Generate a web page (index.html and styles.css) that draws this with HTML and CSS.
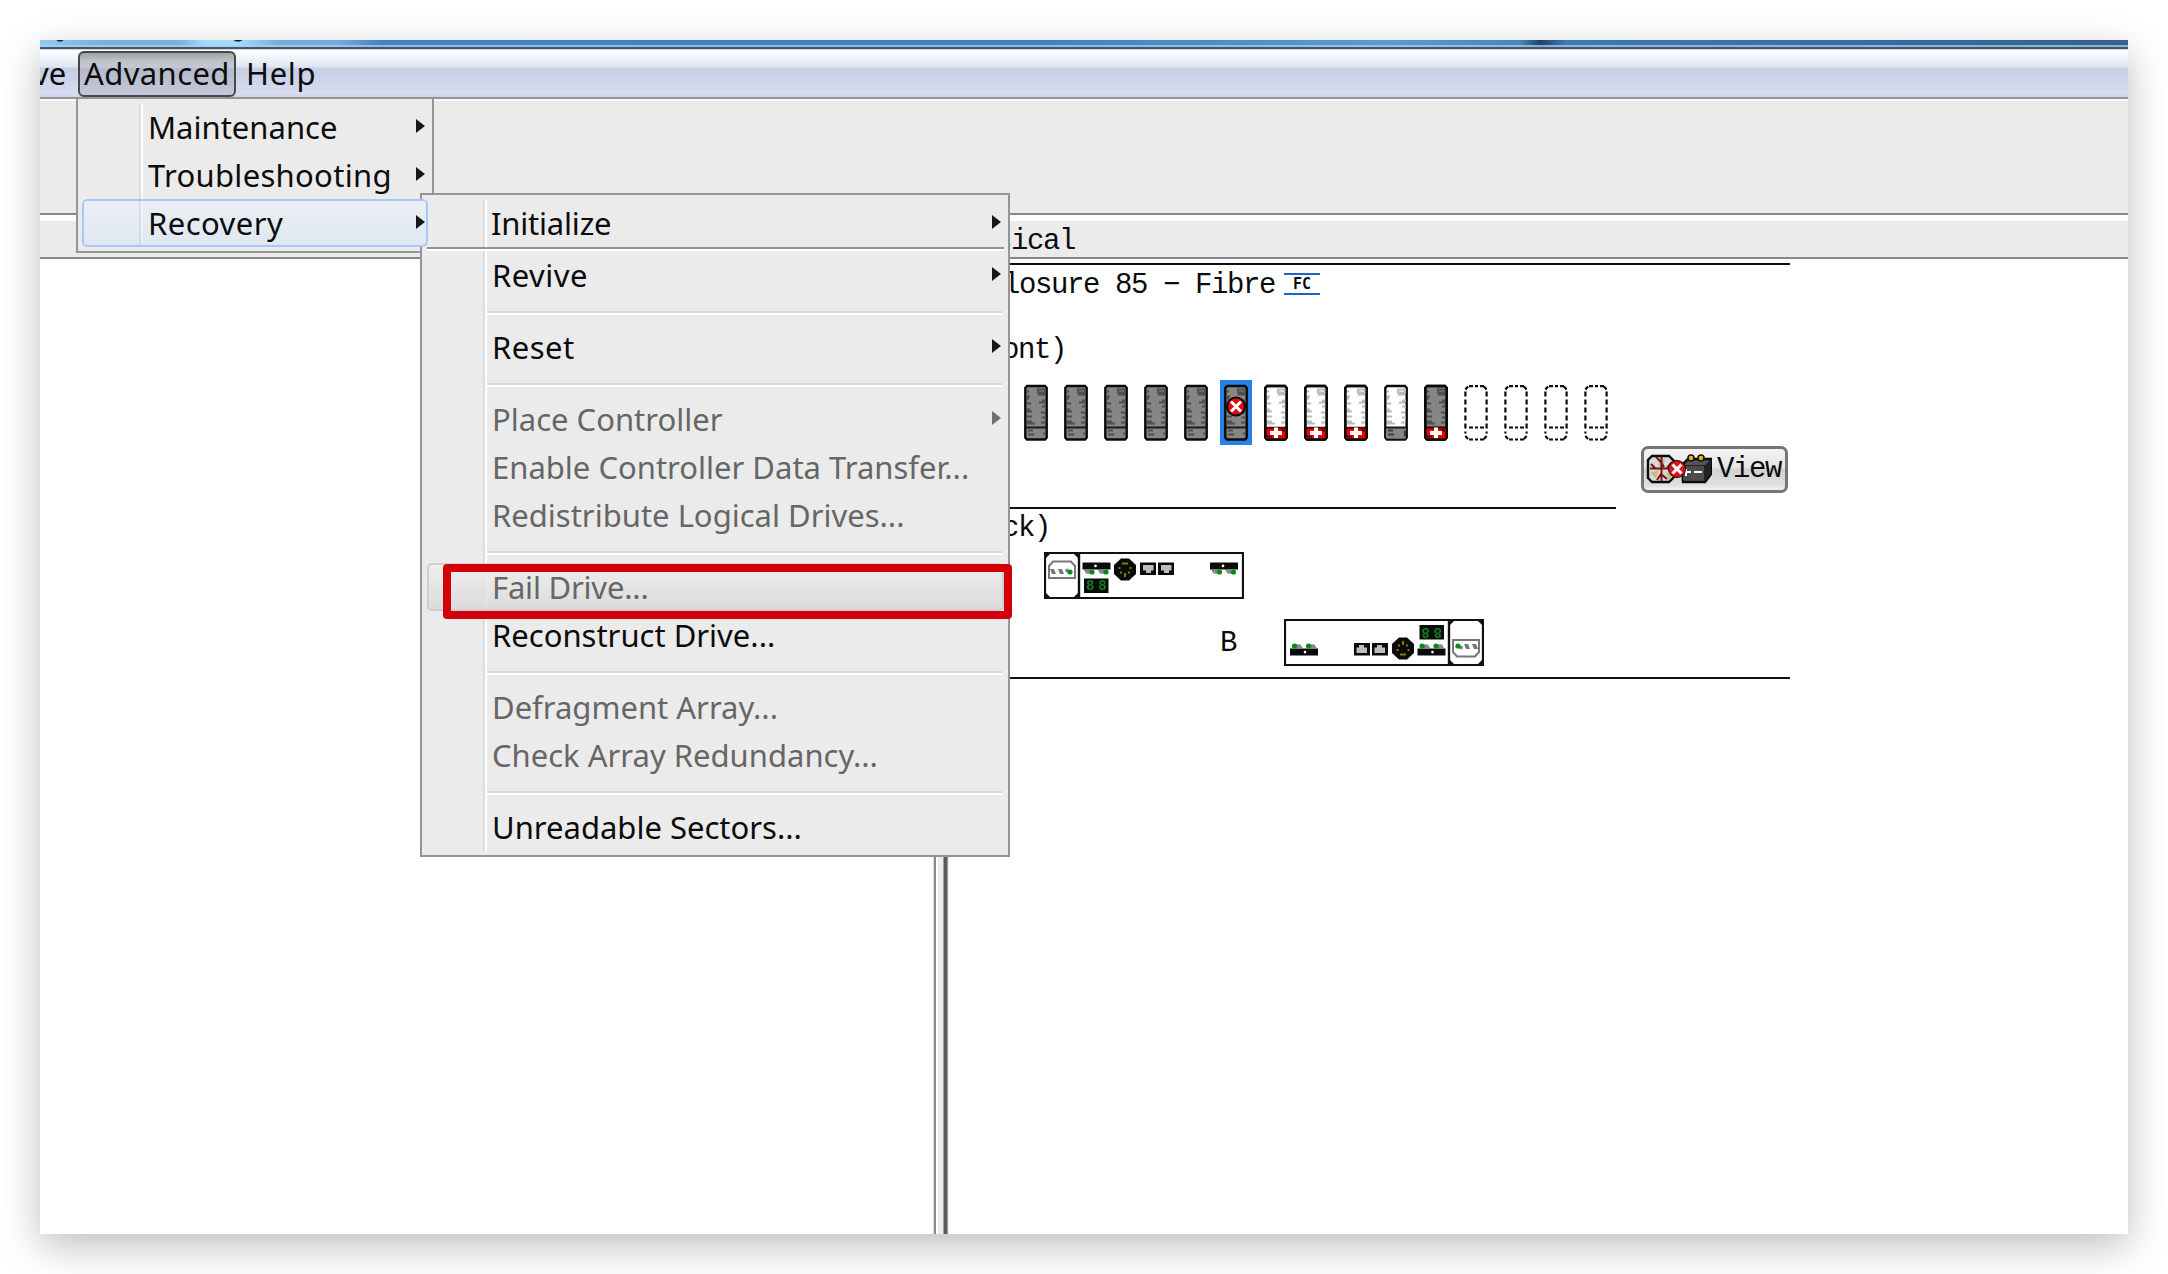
FILE: index.html
```html
<!DOCTYPE html>
<html lang="en">
<head>
<meta charset="utf-8">
<title>Storage Manager</title>
<link rel="stylesheet" href="styles.css">
</head>
<body>
<svg class="defs" width="0" height="0" aria-hidden="true">
  <defs>
    <g id="vents">
      <path d="M14 5h7v3h-7zM14 10h7M18 16h4M15 18h6M18 22h4M17 28h4M18 33h4M17 38h4M3 7h2M3 12h3M3 14h2M3 19h4M3 25h3M3 27h5M3 32h5M3 37h5M3 39h8" fill="none" stroke-width="2"/>
    </g>
    <path id="case" d="M3 1.5H21L22.7 3.5V53L21 55H3L1.3 53V3.5Z"/>
    <g id="drive-gray">
      <use href="#case" fill="#858585" stroke="#0a0a0a" stroke-width="2.4"/>
      <use href="#vents" stroke="#4f4f4f"/>
      <path d="M2 43H22" stroke="#1a1a1a" stroke-width="2"/>
      <path d="M4 46H9M4 50H10M19 49H22" stroke="#4f4f4f" stroke-width="2"/>
    </g>
    <g id="plus">
      <path d="M2 43H22V54H2Z" fill="#ec0000"/>
      <path d="M2 43.3H22M3 52H8M17 46H21" stroke="#4a0508" stroke-width="2"/>
      <path d="M12 43V54M6 48.5H18" stroke="#fff" stroke-width="4"/>
      <use href="#case" fill="none" stroke="#0a0a0a" stroke-width="2.4"/>
    </g>
    <g id="drive-white">
      <use href="#case" fill="#fff" stroke="#0a0a0a" stroke-width="2.4"/>
      <use href="#vents" stroke="#bababa"/>
    </g>
    <g id="drive-spare">
      <use href="#drive-white"/>
      <path d="M2.4 43H21.6V54H2.4Z" fill="#858585"/>
      <path d="M2 43H22" stroke="#1a1a1a" stroke-width="2"/>
      <path d="M4 46H9M4 50H10M21 46V52" stroke="#3d3d3d" stroke-width="2"/>
    </g>
    <g id="drive-empty" fill="none" stroke="#0a0a0a" stroke-width="2.2">
      <path d="M5 1.6H9M11 1.6H14M16 1.6H20M5 55H9M11 55H14M16 55H20M5 43H9M11 43H14M16 43H20"/>
      <path d="M1.4 7V49M22.6 7V49" stroke-dasharray="5 3"/>
      <path d="M1.4 5L4 2M20 2L22.6 5M1.4 51.5L4 54.5M20 54.5L22.6 51.5"/>
    </g>
    <g id="fail">
      <circle r="9" fill="#e30613" stroke="#0a0a0a" stroke-width="2"/>
      <path d="M-5-5L5 5M5-5L-5 5" stroke="#fff" stroke-width="3"/>
    </g>
    <g id="port">
      <path d="M0 0H28V7H0Z" fill="#0a0a0a"/>
      <circle cx="13" cy="3.4" r="1.3" fill="#fff"/>
      <path d="M1 7H7L9 11H4ZM15 7H21L23 11H18Z" fill="#777"/>
      <circle cx="9.5" cy="9.5" r="2.6" fill="#078c10"/><circle cx="23.5" cy="9.5" r="2.6" fill="#078c10"/>
      <circle cx="4.5" cy="9" r="2" fill="#8b8b8b"/><circle cx="18.5" cy="9" r="2" fill="#8b8b8b"/>
    </g>
    <g id="jack">
      <path d="M0 0H16V12.5H0Z" fill="#0a0a0a"/>
      <path d="M3 2.5H13.5V8H11V10.5H6V8H3Z" fill="#bdbdbd"/>
    </g>
    <g id="controller">
      <path d="M1 1H199V46H1Z" fill="#fff" stroke="#111" stroke-width="2.2"/>
      <path d="M35 1V46" stroke="#111" stroke-width="2.4"/>
      <path d="M2 2H6L2 6ZM34 2H30L34 6ZM2 45H6L2 41ZM34 45H30L34 41Z" fill="#111"/>
      <path d="M9 9.5H27L31 14V26H5V14Z" fill="#fff" stroke="#777" stroke-width="2"/>
      <path d="M6 17H10L12 22H8ZM14 17H18L20 22H16Z" fill="#777"/>
      <circle cx="23" cy="18.5" r="2" fill="#888"/><circle cx="26" cy="20" r="2.6" fill="#078c10"/>
      <use href="#port" x="38.5" y="10.5"/>
      <path d="M40 26.5H64.5V41H40Z" fill="#0a0a0a"/>
      <text class="digit" x="42" y="38.3">8</text><text class="digit" x="54.3" y="38.3">8</text>
      <path d="M77 6.5H85L92 13V22L85 28.5H77L70 22V13Z" fill="#0a0a0a"/>
      <path d="M78 11.5H84M74.5 16H76.5M85.5 16H87.5M76 20.5H78M84 20.5H86M81 21V25" stroke="#7d7d00" stroke-width="2"/>
      <use href="#jack" x="96" y="10.5"/>
      <use href="#jack" x="114" y="10.5"/>
      <use href="#port" x="166" y="10.5"/>
    </g>
  </defs>
</svg>

<main class="window">
  <div class="titlebar"></div>
  <nav class="menubar">
    <span class="menubar-item clipped"><span>ve</span></span>
    <span class="menubar-item active">Advanced</span>
    <span class="menubar-item help">Help</span>
  </nav>
  <div class="toolbar"></div>
  <header class="view-header"><span class="mono">Physical</span></header>

  <div class="panes">
    <section class="logical"></section>
    <div class="splitter"></div>
    <section class="physical mono">
      <div class="rule"></div>
      <div class="enclosure"><span>Enclosure 85 − Fibre</span><span class="fc">FC</span></div>
      <div class="side-title front">(Front)</div>
      <div class="drives">
        <svg viewBox="0 0 24 56"><use href="#drive-gray"/></svg>
        <svg viewBox="0 0 24 56"><use href="#drive-gray"/></svg>
        <svg viewBox="0 0 24 56"><use href="#drive-gray"/></svg>
        <svg viewBox="0 0 24 56"><use href="#drive-gray"/></svg>
        <svg viewBox="0 0 24 56"><use href="#drive-gray"/></svg>
        <svg class="selected" viewBox="0 0 24 56"><use href="#drive-gray"/><use href="#fail" x="12" y="22"/></svg>
        <svg viewBox="0 0 24 56"><use href="#drive-white"/><use href="#plus"/></svg>
        <svg viewBox="0 0 24 56"><use href="#drive-white"/><use href="#plus"/></svg>
        <svg viewBox="0 0 24 56"><use href="#drive-white"/><use href="#plus"/></svg>
        <svg viewBox="0 0 24 56"><use href="#drive-spare"/></svg>
        <svg viewBox="0 0 24 56"><use href="#drive-gray"/><use href="#plus"/></svg>
        <svg viewBox="0 0 24 56"><use href="#drive-empty"/></svg>
        <svg viewBox="0 0 24 56"><use href="#drive-empty"/></svg>
        <svg viewBox="0 0 24 56"><use href="#drive-empty"/></svg>
        <svg viewBox="0 0 24 56"><use href="#drive-empty"/></svg>
      </div>
      <div class="view-row">
        <button class="view-button mono">
          <svg width="66" height="32" viewBox="0 0 66 32">
            <path d="M6 4H23L28 9V25L23 30H6L2 26V8Z" fill="#d9d9d9" stroke="#0a0a0a" stroke-width="2.4"/>
            <path d="M12 5L19 8L17 15H13ZM4 21L13 18L10 26ZM20 20L26 24L22 28Z" fill="#c9bf7a"/>
            <path d="M15.500 5V29M4 16.500H27M10 5L15 10L18 15M5 12L10 17M26 10L21 16M11 28L15 22L21 27" fill="none" stroke="#76151b" stroke-width="2"/>
            <path d="M36 13L42 7H65V22L59 30H37Z" fill="#555" stroke="#0a0a0a" stroke-width="2.400"/>
            <path d="M37 13H59L65 7V22L59 29Z" fill="#222"/>
            <path d="M37 14H58V28H37Z" fill="#4c4c4c"/>
            <path d="M40 17V24M40 20H45M48 20H56" stroke="#fff" stroke-width="2"/>
            <circle cx="45" cy="6" r="3" fill="#efb600" stroke="#111" stroke-width="1.500"/>
            <circle cx="55" cy="6" r="3" fill="#efb600" stroke="#111" stroke-width="1.500"/>
            <circle cx="31" cy="17" r="8.500" fill="#e0101c" stroke="#0a0a0a" stroke-width="1"/>
            <path d="M26.500 12.500L35.500 21.500M35.500 12.500L26.500 21.500" stroke="#fff" stroke-width="3"/>
          </svg>
          <span>View</span>
        </button>
      </div>
      <div class="rule short"></div>
      <div class="side-title back">(Back)</div>
      <div class="controller-row a"><svg width="200" height="47" viewBox="0 0 200 47"><use href="#controller"/></svg></div>
      <div class="controller-row b"><span>B</span><svg width="200" height="47" viewBox="0 0 200 47"><use href="#controller" transform="rotate(180 100 23.5)"/></svg></div>
      <div class="rule"></div>
    </section>
  </div>

  <div class="menu mainmenu">
    <div class="item sub">Maintenance</div>
    <div class="item sub wide">Troubleshooting</div>
    <div class="item sub wider chosen">Recovery</div>
  </div>
  <div class="menu submenu">
    <div class="item sub narrow first">Initialize</div>
    <div class="first-line"></div>
    <div class="item sub wider">Revive</div>
    <div class="sep"></div>
    <div class="item sub wider">Reset</div>
    <div class="sep"></div>
    <div class="item sub off">Place Controller</div>
    <div class="item off">Enable Controller Data Transfer...</div>
    <div class="item off">Redistribute Logical Drives...</div>
    <div class="sep"></div>
    <div class="item off narrow hover">Fail Drive...</div>
    <div class="item">Reconstruct Drive...</div>
    <div class="sep"></div>
    <div class="item off">Defragment Array...</div>
    <div class="item off">Check Array Redundancy...</div>
    <div class="sep"></div>
    <div class="item">Unreadable Sectors...</div>
  </div>
  <div class="marker"></div>
</main>
</body>
</html>
```
FILE: styles.css
```css
* { box-sizing: border-box; }
body {
  margin: 0;
  padding: 40px;
  height: 1274px;
  background: #fff;
  overflow: hidden;
  font: 31px/48px "Noto Sans", "Open Sans", sans-serif;
  color: #0c0c0c;
}
.defs { position: absolute; }
.mono {
  font-family: "Liberation Mono", monospace;
  font-size: 29px;
  line-height: 33px;
  letter-spacing: -1.4px;
}
.window {
  position: relative;
  display: flex;
  flex-direction: column;
  width: 2088px;
  height: 1194px;
  background: #fff;
  box-shadow: 0 12px 38px rgba(0, 0, 0, .26);
}
.titlebar {
  height: 10px;
  flex: none;
  background:
    radial-gradient(ellipse 4px 2px at 20px 0, #222 60%, transparent),
    radial-gradient(ellipse 5px 2px at 198px 0, #222 60%, transparent),
    linear-gradient(transparent 5px, rgba(170, 205, 240, .75) 5px 7px, #42586d 7px 9px, #cfd5de 9px),
    linear-gradient(90deg, #8dcbf2, #7db0de 60px 140px, #a5dbfa 165px 200px, #78a9da 240px 300px, #4482c4 340px, #4181c0 1000px, #5b9bd0 1350px, #4a85bd 1480px, #1f4469 1500px, #3c79b5 1525px, #35618f);
}
.menubar {
  display: flex;
  flex: none;
  height: 49px;
  border-bottom: 2px solid #929499;
  background: linear-gradient(#fff, #f0f3f9 8px, #e0e5f2 17px, #c8d0e5 18px, #c9d1e6 24px, #d8dcf0 44px, #cfd3e5);
}
.menubar-item { line-height: 46px; height: 46px; white-space: nowrap; }
.clipped { width: 38px; overflow: hidden; }
.clipped span { margin-left: -7px; }
.active {
  width: 158px;
  margin-top: 1px;
  line-height: 41px;
  padding-left: 4px;
  letter-spacing: .4px;
  border: 2px solid #48484c;
  border-radius: 6px;
  background: linear-gradient(#a3a3a7, #c0c1c9 8px, #c5c7d2 14px, #b4b9ca 16px, #c5c8d9);
}
.help { padding-left: 10px; letter-spacing: .7px; }
.toolbar {
  height: 116px;
  flex: none;
  background: #ebebeb;
  border-top: 2px solid #fbfbfb;
  border-bottom: 2px solid #878792;
}
.view-header {
  height: 44px;
  flex: none;
  padding: 4px 0 0 907px;
  background: #ebebeb;
  border-top: 6px solid #fff;
  border-bottom: 2px solid #868791;
  line-height: 33px;
}
.view-header .mono { display: block; }
.panes { flex: 1; display: flex; min-height: 0; }
.logical { width: 893px; }
.splitter {
  width: 16px;
  background: linear-gradient(90deg, #d8dade 0 1px, #858c95 1px 3px, #fff 3px 5px, #ebebeb 5px 10px, #a0a0a0 10px 11px, #55595c 11px 14px, #9ba1a8 14px 15px, #e2e4e6 15px);
}
.physical { flex: 1; padding-top: 4px; }
.rule { width: 841px; height: 2px; background: #111; }
.rule.short { width: 667px; margin-top: 14px; }
.enclosure { display: flex; margin: 4px 0 0 6px; height: 33px; white-space: nowrap; }
.fc {
  width: 36px;
  height: 22px;
  margin: 4px 0 0 9px;
  border: solid #1c63cc;
  border-width: 2px 0;
  font: bold 15px/18px "DejaVu Sans Mono", monospace;
  letter-spacing: 0;
  text-align: center;
}
.side-title { margin-left: 5px; height: 33px; }
.front { margin-top: 32px; }
.back { margin: 3px 0 0 5px; }
.drives { display: flex; gap: 16px; margin: 17px 0 0 75px; height: 56px; }
.drives svg { width: 24px; height: 57px; flex: none; }
.selected { background: #2a80ea; box-shadow: 0 0 0 4px #2a80ea; }
.view-row { display: flex; padding: 6px 0 0 692px; }
.view-button {
  display: flex;
  align-items: center;
  width: 147px;
  height: 47px;
  padding: 0 0 0 2px;
  gap: 5px;
  border: 3px solid #757575;
  border-radius: 7px;
  background: linear-gradient(#f3f3f3, #e6e6e6 18px, #d2d2d2 21px, #dedede 35px, #f1f1f1);
  color: #0c0c0c;
}
.view-button svg { flex: none; margin-top: -3px; }
.view-button span { margin-top: -1px; }
.controller-row { display: flex; height: 47px; }
.a { margin: 7px 0 0 95px; }
.b { margin: 20px 0 11px 271px; }
.b span { width: 64px; padding-top: 8px; }
.b svg, .a svg { flex: none; }
.digit { font: bold 14px "Liberation Mono", monospace; fill: #0a7a16; letter-spacing: 0; }

.menu { position: absolute; background: #ebebeb; border: 2px solid #959595; }
.menu::before {
  content: "";
  position: absolute;
  top: 4px;
  bottom: 4px;
  width: 4px;
  background: linear-gradient(90deg, #dcdcdc 2px, #fff 2px);
}
.item { position: relative; height: 48px; line-height: 48px; white-space: nowrap; }
.off { color: #666; }
.wide { letter-spacing: .3px; }
.wider { letter-spacing: .45px; }
.narrow { letter-spacing: -.2px; }
.sub::after {
  content: "";
  position: absolute;
  top: 16px;
  border: solid transparent;
  border-width: 7.5px 0 7.5px 9px;
  border-left-color: #181818;
}
.off.sub::after { border-left-color: #707070; }
.mainmenu { left: 36px; top: 57px; width: 358px; height: 156px; padding-top: 4px; }
.mainmenu::before { left: 61px; }
.mainmenu .item { padding-left: 66px; margin: 0 4px; }
.mainmenu .sub::after { left: 334px; }
.mainmenu .chosen {
  z-index: 3;
  width: 346px;
  background:
    linear-gradient(90deg, transparent 57px, rgba(160, 175, 195, .25) 57px 59px, rgba(255, 255, 255, .35) 59px 61px, transparent 61px),
    linear-gradient(#eceff4, #dfe7f2);
  box-shadow: inset 0 0 0 2px #a5c8f6;
  border-radius: 5px;
}
.submenu { z-index: 2; left: 380px; top: 153px; width: 590px; height: 664px; padding: 4px 4px 0 5px; }
.submenu::before { left: 61px; }
.submenu .item { padding-left: 65px; }
.submenu .item.first { padding-left: 64px; }
.submenu .sub::after { left: 565px; }
.first-line {
  position: relative;
  height: 4px;
  width: 577px;
  background: linear-gradient(#929292 2px, #fff 2px);
}
.sep {
  height: 24px;
  margin: 0 0 0 59px;
  width: 516px;
  background: linear-gradient(transparent 12px, #d6d6d6 12px 14px, #fff 14px 16px, transparent 16px);
}
.hover {
  border-radius: 5px;
  box-shadow: inset 0 0 0 2px #cfcfcf;
  background: linear-gradient(rgba(240, 240, 240, .8), rgba(216, 216, 216, .85));
}
.marker {
  position: absolute;
  z-index: 4;
  left: 403px;
  top: 524px;
  width: 569px;
  height: 55px;
  border: 8px solid #d3000c;
  border-radius: 4px;
}
```
